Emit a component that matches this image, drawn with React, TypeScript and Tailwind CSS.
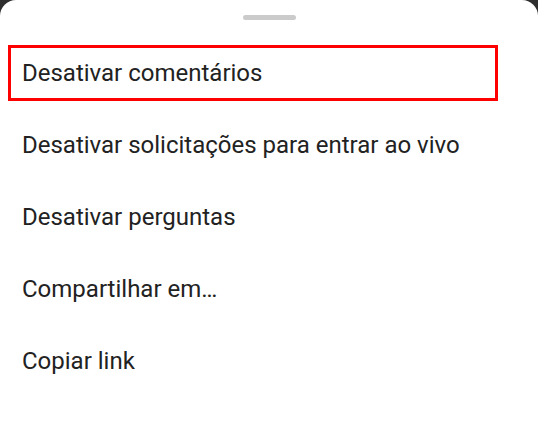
const items = [
  'Desativar comentários',
  'Desativar solicitações para entrar ao vivo',
  'Desativar perguntas',
  'Compartilhar em…',
  'Copiar link',
]

export default function App() {
  return (
    <div className="h-[436px] w-[538px] overflow-hidden bg-[#2e2e2e]">
      <div
        className="h-full rounded-t-[16px] bg-white"
        style={{ fontFamily: 'Roboto, "Noto Sans", sans-serif' }}
      >
        <div className="flex justify-center pt-[15px]">
          <div className="h-[5px] w-[53px] rounded-full bg-[#cbcbcb]" />
        </div>
        <ul className="mt-[17px]">
          {items.map((label, i) => (
            <li
              key={label}
              className="relative flex h-[72px] items-center px-[22px] text-[24px] text-[#222222]"
            >
              {i === 0 && (
                <span className="absolute left-[8px] right-[40px] top-[8px] bottom-[8px] border-[3px] border-[#ff0000]" />
              )}
              {label}
            </li>
          ))}
        </ul>
      </div>
    </div>
  )
}
